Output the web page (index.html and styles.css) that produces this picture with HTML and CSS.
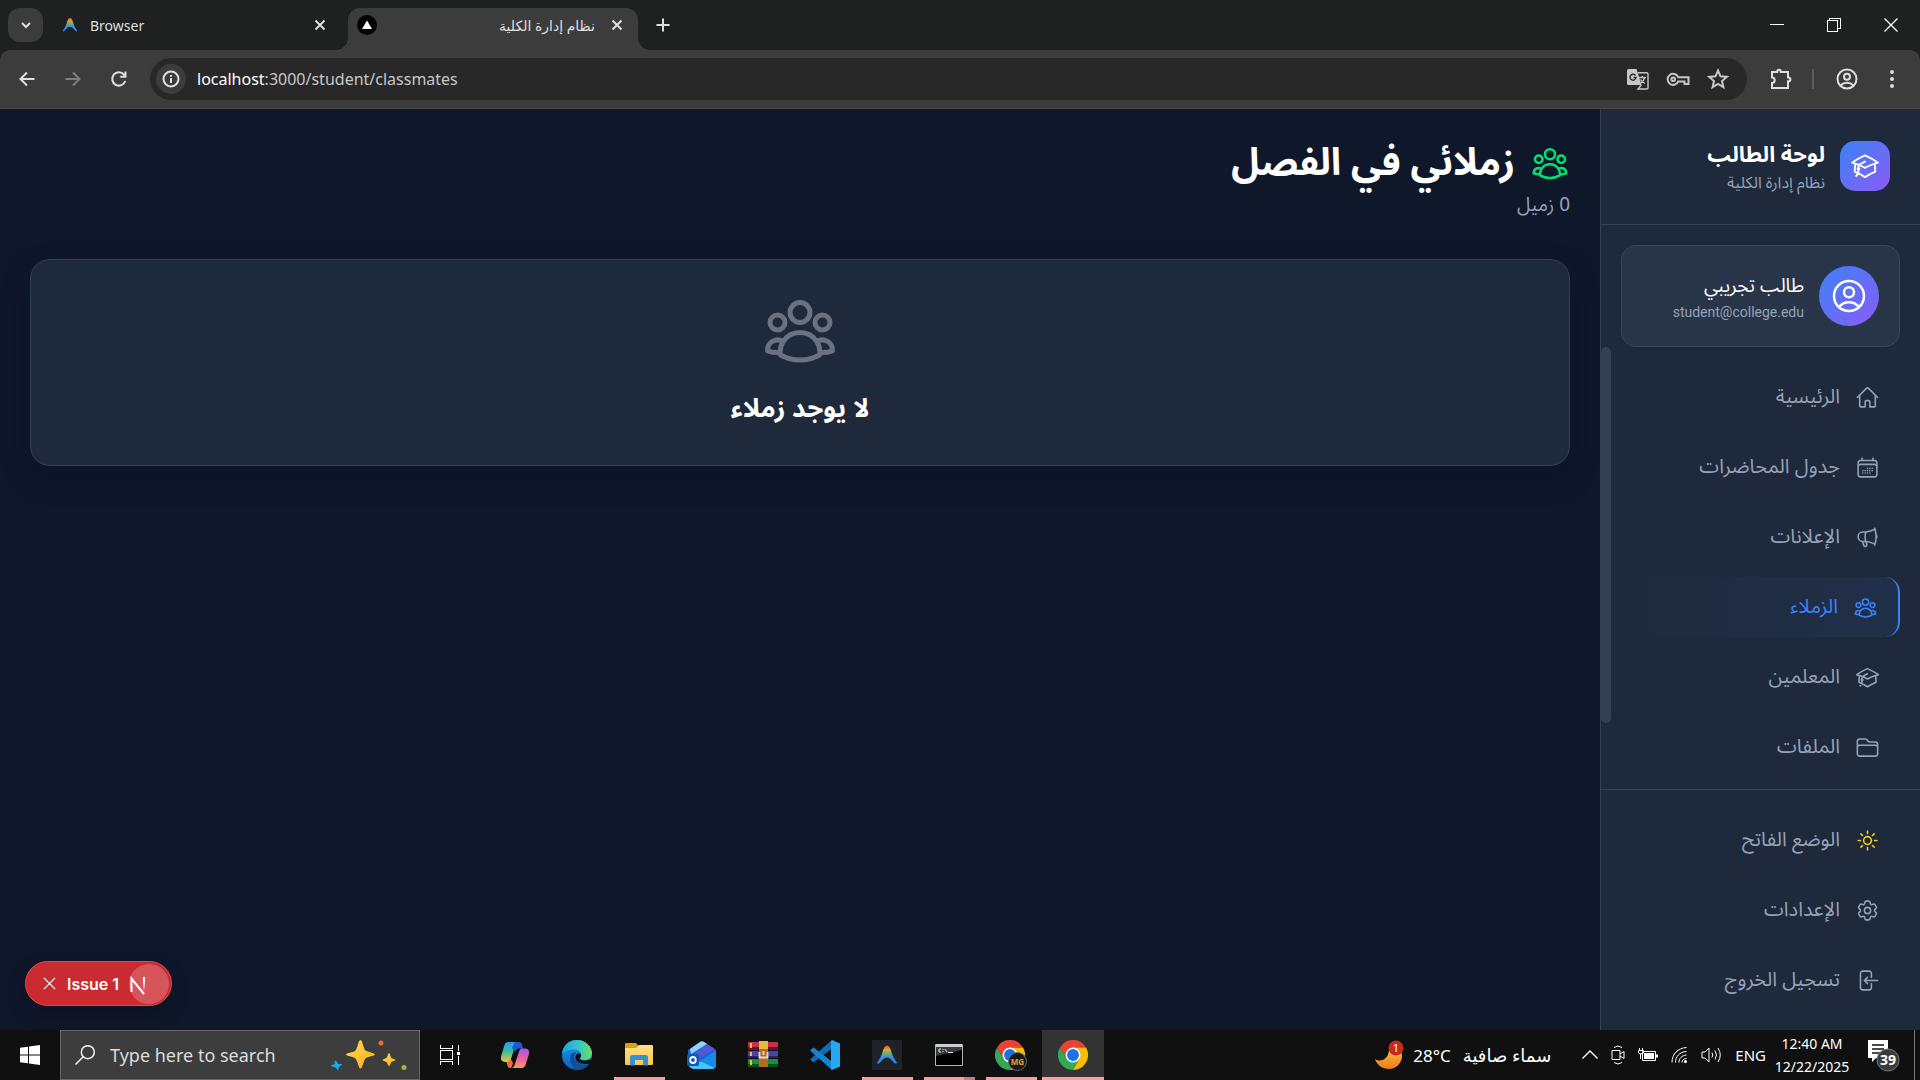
FILE: index.html
```html
<!DOCTYPE html>
<html lang="en">
<head>
<meta charset="utf-8">
<title>نظام إدارة الكلية</title>
<link rel="stylesheet" href="styles.css">
</head>
<body>
<svg class="defs" width="0" height="0" aria-hidden="true">
  <defs>
    <linearGradient id="peak" x1="0" y1="0" x2="0" y2="1"><stop offset="0" stop-color="#e9563c"/><stop offset=".25" stop-color="#e0a23c"/><stop offset=".45" stop-color="#5fb06a"/><stop offset=".65" stop-color="#3a8bf5"/><stop offset="1" stop-color="#2f7bf0"/></linearGradient>
    <linearGradient id="cop1" x1="0" y1="0" x2="0" y2="1"><stop offset="0" stop-color="#1f9df0"/><stop offset=".5" stop-color="#3fbf9a"/><stop offset="1" stop-color="#f2c330"/></linearGradient>
    <linearGradient id="cop2" x1="0" y1="0" x2="0" y2="1"><stop offset="0" stop-color="#a25be8"/><stop offset=".5" stop-color="#e85f9f"/><stop offset="1" stop-color="#fb9a5b"/></linearGradient>
    <linearGradient id="edge1" x1="0" y1="0" x2="1" y2="0"><stop offset="0" stop-color="#1f9fe8"/><stop offset=".55" stop-color="#35c6c8"/><stop offset="1" stop-color="#67e05a"/></linearGradient>
    <linearGradient id="edge2" x1="0" y1="0" x2="0" y2="1"><stop offset="0" stop-color="#1b9be8"/><stop offset="1" stop-color="#0b62c4"/></linearGradient>
    <linearGradient id="fold" x1="0" y1="0" x2="0" y2="1"><stop offset="0" stop-color="#ffe08a"/><stop offset="1" stop-color="#f8c84a"/></linearGradient>
    <linearGradient id="moon" x1="0" y1="0" x2="0" y2="1"><stop offset="0" stop-color="#ffc23c"/><stop offset="1" stop-color="#f07a1c"/></linearGradient>
    <linearGradient id="gold" x1="0" y1="0" x2="1" y2="1"><stop offset="0" stop-color="#ffe14d"/><stop offset="1" stop-color="#f9a91c"/></linearGradient>
    <symbol id="group" viewBox="0 0 24 24"><path d="M18 18.72a9.094 9.094 0 0 0 3.741-.479 3 3 0 0 0-4.682-2.72m.94 3.198.001.031c0 .225-.012.447-.037.666A11.944 11.944 0 0 1 12 21c-2.17 0-4.207-.576-5.963-1.584A6.062 6.062 0 0 1 6 18.719m12 0a5.971 5.971 0 0 0-.941-3.197m0 0A5.995 5.995 0 0 0 12 12.75a5.995 5.995 0 0 0-5.058 2.772m0 0a3 3 0 0 0-4.681 2.72 8.986 8.986 0 0 0 3.74.477m.94-3.197a5.971 5.971 0 0 0-.94 3.197M15 6.75a3 3 0 1 1-6 0 3 3 0 0 1 6 0Zm6 3a2.25 2.25 0 1 1-4.5 0 2.25 2.25 0 0 1 4.5 0Zm-13.5 0a2.25 2.25 0 1 1-4.5 0 2.25 2.25 0 0 1 4.5 0Z"/></symbol>
    <symbol id="cap" viewBox="0 0 24 24"><path d="M4.26 10.147a60.438 60.438 0 0 0-.491 6.347A48.62 48.62 0 0 1 12 20.904a48.62 48.62 0 0 1 8.232-4.41 60.46 60.46 0 0 0-.491-6.347m-15.482 0a50.636 50.636 0 0 0-2.658-.813A59.906 59.906 0 0 1 12 3.493a59.903 59.903 0 0 1 10.399 5.84c-.896.248-1.783.52-2.658.814m-15.482 0A50.717 50.717 0 0 1 12 13.489a50.702 50.702 0 0 1 7.74-3.342M6.75 15a.75.75 0 1 0 0-1.5.75.75 0 0 0 0 1.5Zm0 0v-3.675A55.378 55.378 0 0 1 12 8.443m-7.007 11.55A5.981 5.981 0 0 0 6.75 15.75v-1.5"/></symbol>
    <symbol id="close" viewBox="0 0 12 12"><path d="M1.5 1.5l9 9M10.5 1.5l-9 9"/></symbol>
    <symbol id="antigravity" viewBox="0 0 24 24"><path fill="url(#peak)" d="M12 1.5c2.200 0 3.400 2.300 4.500 6.200 1.400 5 3.300 9 6 12 .9 1.200-.5 2.500-1.700 1.600-2.800-2-4.600-6.600-8.800-6.600s-6 4.600-8.800 6.600c-1.200.9-2.600-.4-1.700-1.600 2.700-3 4.600-7 6-12C8.600 3.800 9.800 1.500 12 1.500Z"/></symbol>
    <symbol id="chrome" viewBox="0 0 48 48"><path fill="#ea4335" d="M3.200 12A24 24 0 0 1 44.800 12H24L13.600 30Z"/><path fill="#34a853" d="M3.200 12A24 24 0 0 0 24 48L34.400 30 24 24l-10.400 6Z"/><path fill="#fbbc04" d="M44.800 12A24 24 0 0 1 24 48L34.400 30 24 12Z"/><circle cx="24" cy="24" r="12" fill="#fff"/><circle cx="24" cy="24" r="9.500" fill="#1a73e8"/></symbol>
  </defs>
</svg>

<header class="browser">
  <div class="tabs">
    <button class="tab-search" aria-label="Search tabs"><svg width="12" height="12" viewBox="0 0 12 12" class="line bold"><path d="M2 4l4 4 4-4"/></svg></button>
    <div class="tab">
      <svg width="16" height="16"><use href="#antigravity"/></svg>
      <span class="tab-title">Browser</span>
      <button class="tab-close" aria-label="Close tab"><svg width="12" height="12" class="line bold"><use href="#close"/></svg></button>
    </div>
    <div class="tab active">
      <svg width="20" height="20" viewBox="0 0 20 20"><circle cx="10" cy="10" r="10" fill="#000"/><path d="M10 5.500 15 14H5Z" fill="#fff"/></svg>
      <span class="tab-title" dir="rtl">نظام إدارة الكلية</span>
      <button class="tab-close" aria-label="Close tab"><svg width="12" height="12" class="line bold"><use href="#close"/></svg></button>
    </div>
    <button class="new-tab" aria-label="New tab"><svg width="14" height="14" viewBox="0 0 14 14" class="line bold"><path d="M7 .5v13M.5 7h13"/></svg></button>
    <div class="window-controls">
      <button aria-label="Minimize"><svg width="14" height="14" viewBox="0 0 14 14" class="line crisp"><path d="M0 6.500h14"/></svg></button>
      <button aria-label="Restore"><svg width="14" height="14" viewBox="0 0 14 14" class="line crisp"><path d="M.5 2.500h10v11H.5zM2.500 2.500v-2h11v10h-3"/></svg></button>
      <button aria-label="Close"><svg width="14" height="14" viewBox="0 0 14 14" class="line"><path d="M.5.5l13 13M13.500.5l-13 13" stroke-width="1.300"/></svg></button>
    </div>
  </div>
  <div class="toolbar">
    <button aria-label="Back"><svg width="18" height="18" viewBox="0 0 18 18" class="line bold"><path d="M16.500 9H2.500M9 2.500 2.500 9 9 15.500"/></svg></button>
    <button aria-label="Forward" disabled><svg width="18" height="18" viewBox="0 0 18 18" class="line bold"><path d="M1.500 9h14M9 2.500 15.500 9 9 15.500"/></svg></button>
    <button aria-label="Reload"><svg width="18" height="18" viewBox="0 0 18 18" class="line bold"><path d="M15.300 11A6.700 6.700 0 1 1 14 4.500L15 6M15.500 1.500v5.200h-5.200"/></svg></button>
    <div class="address">
      <button class="site-info" aria-label="Site information"><svg width="18" height="18" viewBox="0 0 18 18" class="line bold"><circle cx="9" cy="9" r="7.500"/><path d="M9 8v5M9 5v1.800"/></svg></button>
      <div class="url"><b>localhost</b>:3000/student/classmates</div>
      <button aria-label="Translate"><svg width="22" height="22" viewBox="0 0 22 22"><path d="M1.500 1h8l5 16h-13A1.500 1.500 0 0 1 0 15.500v-13A1.500 1.500 0 0 1 1.500 1Z" fill="#c7c7c7"/><path d="M8.500 7.500A3 3 0 1 0 9 9.500H6.500" fill="none" stroke="#282828" stroke-width="1.400"/><path d="M11 4.800h8.700c.7 0 1.300.6 1.300 1.300v13.600c0 .7-.6 1.300-1.300 1.300H11l3.300-4" fill="none" stroke="#c7c7c7" stroke-width="1.400"/><path d="M11.800 9.500h7M15.300 8v1.500M17.700 9.500c-.6 2.800-2 4.500-4.200 6M13.500 11.500c1 1.800 2.300 3 4.500 4" fill="none" stroke="#c7c7c7" stroke-width="1.300"/></svg></button>
      <button aria-label="Passwords"><svg width="24" height="24" viewBox="0 0 24 24" class="line bold"><path d="M12.200 10.200H22.500V17h-4v-2.500h-6.300a5.500 5.500 0 1 1 0-4.300Z"/><circle cx="7.200" cy="12.300" r="1.800"/></svg></button>
      <button aria-label="Bookmark"><svg width="22" height="22" viewBox="0 0 22 22" class="line bold"><path d="m11 2.500 2.500 5.800 6.200.6-4.700 4.100 1.400 6.200L11 16l-5.400 3.200L7 13 2.300 8.900l6.200-.6Z"/></svg></button>
    </div>
    <button class="extensions" aria-label="Extensions"><svg width="22" height="22" viewBox="0 0 22 22" class="line bold"><path d="M2 4h5.200c0-3 3.600-3 3.600 0H18v5.500c3.200 0 3.200 3.800 0 3.800V20H2v-5c3.600 0 3.600-5.500 0-5.500Z"/></svg></button>
    <span class="divider"></span>
    <button class="profile" aria-label="Profile"><svg width="22" height="22" viewBox="0 0 22 22" class="line bold"><circle cx="11" cy="11" r="9.500"/><circle cx="11" cy="8.700" r="3"/><path d="M4.500 17.500c3.500-3.600 9.500-3.600 13 0"/></svg></button>
    <button class="more" aria-label="More"><svg width="6" height="20" viewBox="0 0 6 20" fill="#dcdcdc"><circle cx="3" cy="3" r="2"/><circle cx="3" cy="10" r="2"/><circle cx="3" cy="17" r="2"/></svg></button>
  </div>
</header>

<div class="app" dir="rtl" lang="ar">
  <aside class="sidebar">
    <div class="brand">
      <span class="brand-logo"><svg width="30" height="30" class="icon"><use href="#cap"/></svg></span>
      <div class="names">
        <h2>لوحة الطالب</h2>
        <p>نظام إدارة الكلية</p>
      </div>
    </div>
    <div class="user">
      <span class="avatar"><svg width="40" height="40" viewBox="0 0 24 24" class="icon"><path d="M17.982 18.725A7.488 7.488 0 0 0 12 15.750a7.488 7.488 0 0 0-5.982 2.975m11.963 0a9 9 0 1 0-11.963 0m11.963 0A8.966 8.966 0 0 1 12 21a8.966 8.966 0 0 1-5.982-2.275M15 9.750a3 3 0 1 1-6 0 3 3 0 0 1 6 0Z"/></svg></span>
      <div class="names">
        <h3>طالب تجريبي</h3>
        <p>student@college.edu</p>
      </div>
    </div>
    <nav class="menu">
      <a class="item" href="#home"><svg viewBox="0 0 24 24" class="icon"><path d="m2.250 12 8.954-8.955c.44-.439 1.152-.439 1.591 0L21.750 12M4.500 9.750v10.125c0 .621.504 1.125 1.125 1.125H9.750v-4.875c0-.621.504-1.125 1.125-1.125h2.250c.621 0 1.125.504 1.125 1.125V21h4.125c.621 0 1.125-.504 1.125-1.125V9.750"/></svg>الرئيسية</a>
      <a class="item" href="#schedule"><svg viewBox="0 0 24 24" class="icon"><path d="M6.750 3v2.250M17.250 3v2.250M3 18.750V7.500a2.250 2.250 0 0 1 2.250-2.250h13.500A2.250 2.250 0 0 1 21 7.500v11.250m-18 0A2.250 2.250 0 0 0 5.250 21h13.500A2.250 2.250 0 0 0 21 18.750m-18 0v-7.500A2.250 2.250 0 0 1 5.250 9h13.500A2.250 2.250 0 0 1 21 11.250v7.500m-9-6h.008v.008H12v-.008ZM12 15h.008v.008H12V15Zm0 2.250h.008v.008H12v-.008ZM9.750 15h.008v.008H9.750V15Zm0 2.250h.008v.008H9.750v-.008ZM7.500 15h.008v.008H7.500V15Zm0 2.250h.008v.008H7.500v-.008Zm6.750-4.500h.008v.008h-.008v-.008Zm0 2.250h.008v.008h-.008V15Zm0 2.250h.008v.008h-.008v-.008Zm2.250-4.500h.008v.008H16.500v-.008Zm0 2.250h.008v.008H16.500V15Z"/></svg>جدول المحاضرات</a>
      <a class="item" href="#news"><svg viewBox="0 0 24 24" class="icon"><path d="M10.340 15.840c-.688-.06-1.386-.09-2.090-.09H7.500a4.500 4.500 0 1 1 0-9h.75c.704 0 1.402-.03 2.090-.09m0 9.180c.253.962.584 1.892.985 2.783.247.55.06 1.210-.463 1.511l-.657.38c-.551.318-1.260.117-1.527-.461a20.845 20.845 0 0 1-1.440-4.282m3.102.069a18.030 18.030 0 0 1-.59-4.590c0-1.586.205-3.124.59-4.590m0 9.180a23.848 23.848 0 0 1 8.835 2.535M10.340 6.660a23.847 23.847 0 0 0 8.835-2.535m0 0A23.740 23.740 0 0 0 18.795 3m.38 1.125a23.910 23.910 0 0 1 1.014 5.395m-1.014 8.855c-.118.38-.245.754-.38 1.125m.38-1.125a23.910 23.910 0 0 0 1.014-5.395m0-3.460c.495.413.811 1.035.811 1.730 0 .695-.316 1.317-.811 1.730m0-3.460a24.347 24.347 0 0 1 0 3.460"/></svg>الإعلانات</a>
      <a class="item current" href="#classmates" aria-current="page"><svg class="icon"><use href="#group"/></svg>الزملاء</a>
      <a class="item" href="#teachers"><svg class="icon"><use href="#cap"/></svg>المعلمين</a>
      <a class="item" href="#files"><svg viewBox="0 0 24 24" class="icon"><path d="M2.250 12.750V12A2.250 2.250 0 0 1 4.500 9.750h15A2.250 2.250 0 0 1 21.750 12v.75m-8.690-6.440-2.120-2.120a1.500 1.500 0 0 0-1.061-.44H4.500A2.250 2.250 0 0 0 2.250 6v12a2.250 2.250 0 0 0 2.250 2.250h15A2.250 2.250 0 0 0 21.750 18V9a2.250 2.250 0 0 0-2.250-2.250h-5.379a1.500 1.500 0 0 1-1.060-.44Z"/></svg>الملفات</a>
    </nav>
    <div class="actions">
      <button class="item"><svg viewBox="0 0 24 24" class="icon sun"><path d="M12 3v2.250m6.364.386-1.591 1.591M21 12h-2.250m-.386 6.364-1.591-1.591M12 18.750V21m-4.773-4.227-1.591 1.591M5.250 12H3m4.227-4.773L5.636 5.636M15.750 12a3.750 3.750 0 1 1-7.500 0 3.750 3.750 0 0 1 7.500 0Z"/></svg>الوضع الفاتح</button>
      <button class="item"><svg viewBox="0 0 24 24" class="icon"><path d="M9.594 3.940c.09-.542.560-.940 1.110-.940h2.593c.55 0 1.020.398 1.110.940l.213 1.281c.063.374.313.686.645.870.074.040.147.083.220.127.325.196.720.257 1.075.124l1.217-.456a1.125 1.125 0 0 1 1.370.490l1.296 2.247a1.125 1.125 0 0 1-.260 1.431l-1.003.827c-.293.241-.438.613-.430.992a7.723 7.723 0 0 1 0 .255c-.008.378.137.750.430.991l1.004.827c.424.350.534.955.260 1.430l-1.298 2.247a1.125 1.125 0 0 1-1.369.491l-1.217-.456c-.355-.133-.750-.072-1.076.124a6.470 6.470 0 0 1-.220.128c-.331.183-.581.495-.644.869l-.213 1.281c-.090.543-.560.940-1.110.940h-2.594c-.550 0-1.019-.398-1.110-.940l-.213-1.281c-.062-.374-.312-.686-.644-.870a6.520 6.520 0 0 1-.220-.127c-.325-.196-.720-.257-1.076-.124l-1.217.456a1.125 1.125 0 0 1-1.369-.490l-1.297-2.247a1.125 1.125 0 0 1 .260-1.431l1.004-.827c.292-.240.437-.613.430-.991a6.932 6.932 0 0 1 0-.255c.007-.380-.138-.751-.430-.992l-1.004-.827a1.125 1.125 0 0 1-.260-1.430l1.297-2.247a1.125 1.125 0 0 1 1.370-.491l1.216.456c.356.133.751.072 1.076-.124.072-.044.146-.086.220-.128.332-.183.582-.495.644-.869l.214-1.280Z"/><path d="M15 12a3 3 0 1 1-6 0 3 3 0 0 1 6 0Z"/></svg>الإعدادات</button>
      <button class="item"><svg viewBox="0 0 24 24" class="icon"><path d="M15.750 9V5.250A2.250 2.250 0 0 0 13.500 3h-6a2.250 2.250 0 0 0-2.250 2.250v13.500A2.250 2.250 0 0 0 7.500 21h6a2.250 2.250 0 0 0 2.250-2.250V15M12 9l-3 3m0 0 3 3m-3-3h12.750"/></svg>تسجيل الخروج</button>
    </div>
  </aside>

  <main class="content">
    <h1><svg width="40" height="40" class="icon"><use href="#group"/></svg>زملائي في الفصل</h1>
    <p class="count">0 زميل</p>
    <section class="empty">
      <svg width="80" height="80" class="icon"><use href="#group"/></svg>
      <h2>لا يوجد زملاء</h2>
    </section>
  </main>

  <div class="issue" dir="ltr">
    <button aria-label="Dismiss"><svg width="15" height="15" class="line"><use href="#close"/></svg></button>
    <span>Issue 1</span>
    <i><svg width="40" height="40" viewBox="0 0 40 40" fill="none"><linearGradient id="nfade" x1="0" y1="0" x2="0" y2="1"><stop offset=".3" stop-color="#fff"/><stop offset="1" stop-color="#fff" stop-opacity="0"/></linearGradient><path d="M2.500 28V14.500L15 30" stroke="#fff" stroke-width="2"/><path d="M14 13h2v14h-2z" fill="url(#nfade)"/></svg></i>
  </div>
</div>

<footer class="taskbar">
  <button class="start" aria-label="Start"><svg width="20" height="20" viewBox="0 0 20 20" fill="#fff"><path d="M0 2.800 8 1.700V9.500H0zM9 1.500 20 0v9.500H9zM0 10.500h8v7.800L0 17.200zM9 10.500h11V20L9 18.500z"/></svg></button>
  <label class="search">
    <svg width="20" height="20" viewBox="0 0 20 20" class="line"><circle cx="12.800" cy="7.200" r="6.500" stroke-width="1.400"/><path d="M8.200 11.800.5 19.500" stroke-width="1.400"/></svg>
    <input type="text" placeholder="Type here to search" aria-label="Search">
    <svg width="76" height="32" viewBox="0 0 76 32"><path fill="url(#gold)" d="M29.500 1c2 0 3 9 5 10.500S44 14 44 15.500s-7.500 2-9.500 4-3 10-5 10-3-8-5-10-9.500-2.500-9.500-4 7.500-2 9.500-4S27.500 1 29.500 1Z"/><path fill="url(#gold)" d="M58 14c1 0 1.500 4 2.500 5s4 1 4 2-3 1-4 2-1.500 4-2.500 4-1.500-3-2.500-4-4-1-4-2 3-1 4-2 1.500-5 2.500-5Z"/><path fill="#18a8f0" d="M4.500 21.500c1 0 2 3 3 3.500s3.500-.5 3.500.5-2.500 1.500-3 2.500 0 3-1 3-1.500-2-2.500-2.500S0 27.500 0 26.500s3-.5 3.500-1.500 0-3.500 1-3.500Z"/><circle cx="50" cy="4" r="2.500" fill="#f0682c"/><circle cx="73" cy="28.500" r="2.500" fill="#86c440"/></svg>
  </label>
  <div class="apps">
    <button class="task-view" aria-label="Task View"><svg width="20" height="20" viewBox="0 0 20 20" class="line crisp"><path d="M.5 0v3.500h12V0M.5 5.500h12v9H.5zM.5 20v-3.500h12V20M18.500 0v6M18.500 11v9"/><path d="M17 6.500h3v3h-3z" fill="#fff" stroke="none"/></svg></button>
    <button aria-label="Copilot"><svg width="30" height="30" viewBox="0 0 30 30"><path fill="url(#cop1)" d="M8.500 2H19c-2 0-3 1-3.600 3L11 19c-.6 2-1.500 3-3.500 3H5c-4 0-4.500-3-3.800-6L4.500 5c.6-2 2-3 4-3Z"/><path fill="#1d58cf" d="M15 2h4c2 0 2.600 1.200 3.200 3l.9 3.500h-4c-2 0-3.100 1-3.900 3.500L12 8Z"/><path fill="url(#cop2)" d="M21.500 28H11c2 0 3-1 3.600-3L19 11.500c.6-2 1.500-3 3.500-3H25c4 0 4.500 3 3.800 6L25.500 25c-.6 2-2 3-4 3Z"/><path fill="#f26a4a" d="M6.500 22c2.500 0 3.500-1 4.300-3l2.200 4c-.8 3.500-1.500 5-3 5s-2.300-1-2.700-3Z"/></svg></button>
    <button aria-label="Edge"><svg width="30" height="30" viewBox="0 0 30 30"><circle cx="15" cy="15" r="15" fill="url(#edge2)"/><path fill="url(#edge1)" d="M0 14C1 5 7 0 15 0c9 0 15 7 15 13 0 5-4 7-7.500 7-3 0-5.300-1-4.500-2.200 2.500-3.800 0-8.300-5.500-8.300C6 9.500 1 12 0 14Z"/><path fill="#124f98" d="M10.500 13c-4.500 3-3 13 4 16.800 5.500.5 10-2 12.800-6.200-7.300 3-14-.6-15-5.600-.3-2 .5-4 2-5-1-.5-2.500-.6-3.800 0Z"/><path fill="#101010" d="M30 22.500c-5 2.500-11.500 1.800-14.500-.7-2.200-2-2.800-5-1-7.500 2-2 5-1 4.600 1.700-.3 1.700-1.500 2-1 3 .8 1.500 6 2.500 10 .5 2-1 3 1 1.900 3Z"/></svg></button>
    <button class="open" aria-label="File Explorer"><svg width="30" height="30" viewBox="0 0 30 30"><path fill="#e0a008" d="M1 4a1 1 0 0 1 1-1h10l2.500 3H28v5H1z"/><path fill="url(#fold)" d="M1 8h11l3-3h13a1 1 0 0 1 1 1v18a1 1 0 0 1-1 1H2a1 1 0 0 1-1-1z"/><path fill="#3490d8" d="M6 25.500V17a2 2 0 0 1 2-2h14a2 2 0 0 1 2 2v8.500h-5V20h-8v5.500z"/></svg></button>
    <button aria-label="Outlook"><svg width="30" height="30" viewBox="0 0 30 30"><path fill="#1e62d6" d="M2 10 14 2q2-1.300 4 0l12 8v14H2z"/><path fill="#8fd3fb" d="M4 9 14 2q2-1.300 4 0l3 2L5 14z"/><path fill="#4d5bd9" d="m21 4 8 5L10 20 4 16z"/><path fill="#45c5fa" d="M2 14l12 8 16-11v14a4 4 0 0 1-4 4H8a6 6 0 0 1-6-6z"/><path fill="#1689ea" d="M30 11v14q0 2-1.500 3L14 21z"/><rect x="1" y="14" width="12" height="12" rx="2" fill="#0f58b8"/><ellipse cx="7" cy="20" rx="2.800" ry="3" fill="none" stroke="#fff" stroke-width="1.800"/></svg></button>
    <button aria-label="WinRAR"><svg width="30" height="30" viewBox="0 0 30 30"><path fill="#c62f4f" d="M0 2h30v8H0z"/><path fill="#4a44ad" d="M0 11h30v7H0z"/><path fill="#1c8c46" d="M0 19h30v8H0z"/><path fill="#6d0f28" d="M0 7h30v3H0z"/><path fill="#272269" d="M0 16h30v2H0z"/><path fill="#0b4f24" d="M0 24h30v3H0z"/><path fill="#e9c341" d="M2 3h2v5H2zM2 12h2v4H2zM2 20h2v5H2z"/><path fill="#b86a1e" d="M11 1h9v26h-9z"/><path fill="#e7b93c" d="M11 1h9v8h-9z"/><path fill="none" stroke="#ddd" stroke-width="1.800" d="M11.500 12v5.500h8V12M15.500 11v4"/></svg></button>
    <button aria-label="VS Code"><svg width="30" height="30" viewBox="0 0 30 30"><path fill="#0a6fb8" d="M22 8.500 3.500 22.500 0 19.500 22 0z"/><path fill="#1286d2" d="M22 21.500 3.500 7.500 0 10.500 22 30z"/><path fill="#27a9f2" d="M22 0l8 3.500v23L22 30l-1-1.500V1.500z"/></svg></button>
    <button class="open" aria-label="Antigravity"><svg width="30" height="30" viewBox="0 0 30 30"><path fill="#202227" d="M0 0h30v30H0z"/><use href="#antigravity" x="4" y="4" width="22" height="22"/></svg></button>
    <button class="open many" aria-label="Command Prompt"><svg width="28" height="24" viewBox="0 0 28 24"><path fill="#000" stroke="#aeb4b8" d="M.5 1.500h27v21H.5z"/><path fill="#c8d0d4" d="M1 1h26v3H1z"/><path fill="#3a3a3a" d="M1 4h26v3L1 13z"/><path fill="none" stroke="#e8e8e8" d="M6 6H4v3h2M8 6v1M8 8v1M10 6l2 3M13 9.500h5"/></svg></button>
    <button class="open" aria-label="Chrome"><svg width="32" height="32" viewBox="0 0 32 32"><use href="#chrome" x="0" y="1" width="30" height="30"/><circle cx="22.500" cy="22.500" r="9" fill="#191919" stroke="#666"/><text x="22.500" y="25.500" text-anchor="middle" class="mg">MG</text></svg></button>
    <button class="open focused" aria-label="Chrome window"><svg width="30" height="30"><use href="#chrome"/></svg></button>
  </div>
  <div class="tray">
    <button class="weather">
      <svg width="30" height="30" viewBox="0 0 30 30"><path fill="url(#moon)" d="M0 19c6 4 14 0 14-10 4-3 13-1 13 7 0 7-6 13-13 13S2 25 0 19Z"/><circle cx="21" cy="8" r="7.500" fill="#c42b1c"/><text x="21" y="12" text-anchor="middle" class="badge-text">1</text></svg>
      <span>28°C</span><span class="sky" dir="rtl">سماء صافية</span>
    </button>
    <svg width="16" height="10" viewBox="0 0 16 10" class="line"><path d="M.5 8.500 8 1l7.500 7.500" stroke-width="1.400"/></svg>
    <svg width="14" height="20" viewBox="0 0 14 20" class="line"><path d="M1 5.500h8v9H1zM9 9l4-2.500v7L9 11M3 2.500q4-3 8 0M3 17.500q4 3 8 0"/></svg>
    <svg width="20" height="16" viewBox="0 0 20 16" class="line"><path d="M4.500 4.500h13v9h-13z"/><path d="M6 6h10v6H6zM18 7.500h2v3h-2z" fill="#fff" stroke="none"/><path d="M1.500 1v2M4.500 1v2M.5 3.500h5V6q-2.500 2-5 0zM2.500 7v5"/></svg>
    <svg width="17" height="18" viewBox="0 0 17 18" class="line"><path d="M1 16.500C1 8 7 2 15.500 1.500M4.500 16.500c0-6 4-10.500 11-11M8 16.500c0-4 2.500-7 7.500-7.500M11 16.500c0-2 1.500-4 4.500-4"/><circle cx="14.500" cy="15.500" r="1.500" fill="#fff" stroke="none"/></svg>
    <svg width="21" height="18" viewBox="0 0 21 18" class="line"><path d="M1 6h3l4-4v14l-4-4H1zM11 6.500q1.500 2.500 0 5M14 4.500q3 4.500 0 9M17 2q4.500 7 0 14"/></svg>
    <span class="lang">ENG</span>
    <time class="clock">12:40 AM<br>12/22/2025</time>
    <button class="notices" aria-label="Notifications"><svg width="34" height="34" viewBox="0 0 34 34"><path fill="#fff" d="M0 2h20v18H8l-4 4v-4H0z"/><path stroke="#101010" stroke-width="1.500" d="M4 7h12M4 11h12M4 15h8"/><circle cx="20" cy="22" r="11" fill="#3b3b3b" stroke="#777"/><text x="20" y="27" text-anchor="middle" class="notice-count">39</text></svg></button>
  </div>
</footer>
</body>
</html>
```
FILE: styles.css
```css
* { box-sizing: border-box; margin: 0; padding: 0; }

body {
  display: flex;
  flex-direction: column;
  min-height: 100vh;
  background: #0f172a;
  color: #fff;
  font-family: "Noto Sans", "DejaVu Sans", sans-serif;
  font-size: 16px;
}

button {
  display: inline-flex;
  align-items: center;
  justify-content: center;
  flex: none;
  border: 0;
  background: none;
  color: inherit;
  font: inherit;
}

svg { display: block; flex: none; }
.defs { position: absolute; }
.line { fill: none; stroke: currentColor; stroke-width: 1; }
.bold { stroke-width: 2; }
.crisp { shape-rendering: crispEdges; }
.icon {
  fill: none;
  stroke: currentColor;
  stroke-width: 1.5;
  stroke-linecap: round;
  stroke-linejoin: round;
}

/* Browser window */
.browser { background: #1f2120; color: #dfdfdf; }
.tabs { display: flex; align-items: center; height: 50px; padding-left: 8px; }
.tab-search { width: 35px; height: 34px; border-radius: 12px; background: #3c3c3c; }
.tab {
  display: flex;
  align-items: center;
  gap: 12px;
  width: 290px;
  height: 42px;
  margin-left: 5px;
  padding: 0 8px 0 14px;
  font-size: 14px;
}
.tab.active {
  position: relative;
  align-self: flex-end;
  margin-left: 10px;
  padding: 0 11px 8px 9px;
  border-radius: 12px 12px 0 0;
  background: #3c3c3c;
}
.tab.active::before,
.tab.active::after {
  content: "";
  position: absolute;
  bottom: 0;
  width: 12px;
  height: 12px;
}
.tab.active::before { right: 100%; background: radial-gradient(circle at 0 0, transparent 12px, #3c3c3c 12px); }
.tab.active::after { left: 100%; background: radial-gradient(circle at 100% 0, transparent 12px, #3c3c3c 12px); }
.tab-title { flex: 1; }
.tab-close { width: 20px; height: 20px; }
.new-tab { width: 30px; height: 30px; margin-left: 10px; }
.window-controls { display: flex; margin-left: auto; padding-right: 1px; color: #fff; }
.window-controls button { width: 57px; height: 50px; }

.toolbar {
  display: flex;
  align-items: center;
  height: 59px;
  padding: 0 14px 1px 4px;
  border-bottom: 1px solid #4a4a4a;
  border-radius: 10px 10px 0 0;
  background: #3c3c3c;
}
.toolbar > button { width: 46px; height: 40px; }
.toolbar > button:disabled { color: #7d7d7d; }
.address {
  display: flex;
  align-items: center;
  flex: 1;
  height: 42px;
  margin-left: 8px;
  padding: 0 9px 0 6px;
  border-radius: 21px;
  background: #282828;
  color: #c7c7c7;
}
.address > button { width: 40px; height: 30px; }
.address > .site-info { width: 30px; border-radius: 15px; background: #3c3c3c; color: #dfdfdf; }
.url { flex: 1; padding-left: 11px; font-size: 16px; }
.url b { color: #fff; font-weight: 400; }
.toolbar > .extensions { width: 40px; margin-left: 14px; }
.divider { width: 2px; height: 20px; margin: 0 13px 0 11px; background: #5c5c5c; }
.toolbar > .profile { width: 40px; }
.toolbar > .more { width: 28px; margin-left: 11px; }

/* Application */
.app {
  position: relative;
  display: flex;
  flex: 1;
  font-family: "Noto Sans Arabic", "DejaVu Sans", sans-serif;
}
.sidebar {
  display: flex;
  flex-direction: column;
  width: 320px;
  border-left: 1px solid #334155;
  background: #1e293b;
}
.brand {
  display: flex;
  align-items: center;
  gap: 15px;
  height: 116px;
  padding: 0 30px 2px;
  border-bottom: 1px solid #334155;
}
.brand-logo, .avatar {
  display: grid;
  place-items: center;
  flex: none;
  background: linear-gradient(135deg, #3b82f6, #8b5cf6);
}
.brand-logo { width: 50px; height: 50px; border-radius: 15px; }
.names { padding-top: 4px; }
.brand h2 { font-size: 22px; line-height: 30px; }
.brand p { color: #94a3b8; font-size: 16px; line-height: 26px; }
.user {
  display: flex;
  align-items: center;
  gap: 15px;
  margin: 20px 20px 0;
  padding: 20px;
  border: 1px solid #3b485b;
  border-radius: 15px;
  background: #283548;
}
.avatar { width: 60px; height: 60px; border-radius: 50%; }
.user h3 { font-size: 19px; font-weight: 400; line-height: 28px; }
.user p { color: #94a3b8; font-family: Roboto, sans-serif; font-size: 14px; line-height: 24px; }
.menu, .actions { display: flex; flex-direction: column; gap: 10px; padding: 20px; }
.menu { position: relative; flex: 1; padding-bottom: 0; }
.menu::before {
  content: "";
  position: absolute;
  top: 0;
  left: 0;
  width: 10px;
  height: 85%;
  border-radius: 5px;
  background: #334155;
}
.actions { border-top: 1px solid #334155; }
.item {
  display: flex;
  align-items: center;
  justify-content: flex-start;
  gap: 15px;
  height: 60px;
  padding: 0 20px;
  border-radius: 15px;
  color: #94a3b8;
  font-size: 20px;
  text-decoration: none;
}
.item .icon { width: 25px; height: 25px; }
.item .sun { color: #facc15; }
.item.current {
  border-right: 2px solid #3b82f6;
  background: linear-gradient(to left, rgba(59, 130, 246, .08), transparent);
  color: #3b82f6;
}

.content { flex: 1; padding: 30px; }
.content h1 {
  display: flex;
  align-items: center;
  gap: 15px;
  font-size: 38px;
  line-height: 48px;
}
.content h1 .icon { color: #05df72; }
.count { color: #94a3b8; font-size: 19px; line-height: 36px; }
.empty {
  display: flex;
  flex-direction: column;
  align-items: center;
  gap: 20px;
  margin-top: 36px;
  padding: 30px;
  border: 1px solid #334155;
  border-radius: 20px;
  background: #1e293b;
  box-shadow: 0 12px 24px rgba(15, 15, 35, .5);
}
.empty .icon { color: #6a7282; }
.empty h2 { padding-bottom: 8px; font-size: 26px; line-height: 37px; }

.issue {
  position: absolute;
  left: 25px;
  bottom: 24px;
  display: flex;
  align-items: center;
  height: 45px;
  padding: 0 2px 0 13px;
  border: 1px solid #e5484d;
  border-radius: 23px;
  background: #ca2a30;
  font-family: Inter, sans-serif;
  font-size: 16px;
  font-weight: 600;
  box-shadow: 0 8px 20px rgba(0, 0, 0, .2);
}
.issue button { width: 20px; height: 20px; }
.issue span { padding: 0 10px 0 8px; }
.issue i { width: 40px; height: 40px; border-radius: 50%; background: #d6555b; }

/* Taskbar */
.taskbar { display: flex; align-items: stretch; height: 50px; background: #101010; }
.start { width: 60px; }
.search {
  display: flex;
  align-items: center;
  width: 360px;
  padding: 0 12px 0 14px;
  border: 1px solid #666;
  background: #3d3d3d;
}
.search input {
  flex: 1;
  min-width: 0;
  padding-left: 15px;
  border: 0;
  background: none;
  color: #fff;
  font-family: "Noto Sans", sans-serif;
  font-size: 18px;
}
.search input::placeholder { color: #dcdcdc; opacity: 1; }
.apps { display: flex; }
.apps button { position: relative; width: 62px; }
.apps .task-view { width: 60px; margin-right: 4px; }
.open::after {
  content: "";
  position: absolute;
  right: 5px;
  bottom: 0;
  left: 6px;
  height: 3px;
  background: #ff99a4;
}
.many::after { background: linear-gradient(to right, #ff99a4 40px, #c97a82 40px); }
.apps .focused { background: #333; }
.focused::after { right: 0; left: 0; }
.mg { fill: #e0a83c; font: 700 8px "Noto Sans", sans-serif; }
.tray { display: flex; align-items: center; gap: 13px; margin-left: auto; padding-right: 5px; }
.weather { gap: 8px; margin-right: 18px; font-size: 17px; }
.sky { padding-left: 4px; font-size: 18px; }
.badge-text { fill: #fff; font: 11px "Noto Sans", sans-serif; }
.lang { font-size: 15px; }
.clock { width: 76px; margin: 0 5px 0 -5px; font-size: 14px; line-height: 23px; text-align: center; white-space: nowrap; }
.notices { height: 50px; padding-right: 12px; border-right: 1px solid #777; }
.notice-count { fill: #fff; font: 700 14px "Noto Sans", sans-serif; }
```
